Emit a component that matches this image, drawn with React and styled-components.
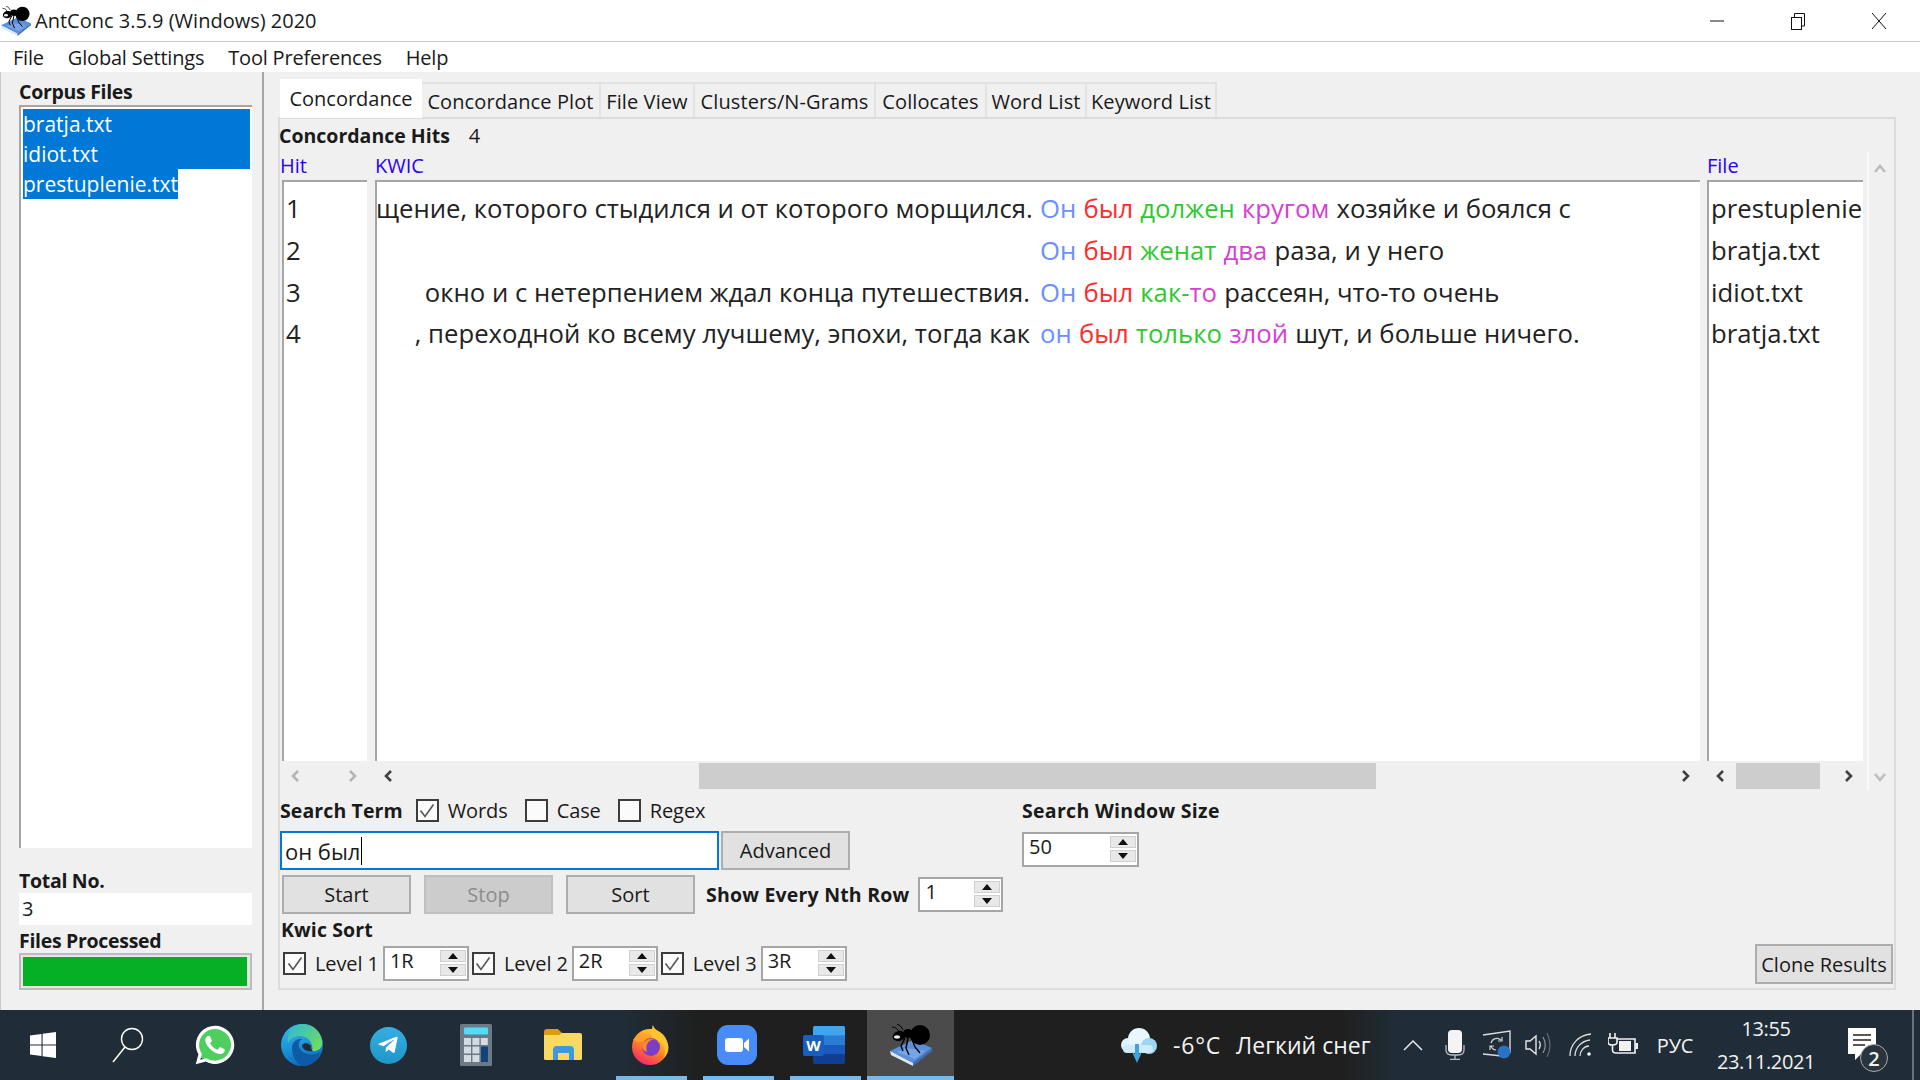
import React from "react";
import styled, { createGlobalStyle } from "styled-components";
import { FaWhatsapp, FaTelegramPlane } from "react-icons/fa";

const GlobalStyle = createGlobalStyle`
  html, body {
    margin: 0;
    padding: 0;
    overflow: hidden;
    background: #f0f0f0;
  }
  * {
    box-sizing: border-box;
  }
`;

const kwicRows = [
  {
    left: "щение, которого стыдился и от которого морщился.",
    words: [["Он", "#6a90ff"], ["был", "#ff2b2b"], ["должен", "#2fc92f"], ["кругом", "#d43fd4"]],
    rest: "хозяйке и боялся с",
  },
  {
    left: "",
    words: [["Он", "#6a90ff"], ["был", "#ff2b2b"], ["женат", "#2fc92f"], ["два", "#d43fd4"]],
    rest: "раза, и у него",
  },
  {
    left: "окно и с нетерпением ждал конца путешествия.",
    words: [["Он", "#6a90ff"], ["был", "#ff2b2b"], ["как-", "#2fc92f"], ["то", "#d43fd4"]],
    rest: "рассеян, что-то очень",
    joined: true,
  },
  {
    left: ", переходной ко всему лучшему, эпохи, тогда как",
    words: [["он", "#6a90ff"], ["был", "#ff2b2b"], ["только", "#2fc92f"], ["злой", "#d43fd4"]],
    rest: "шут, и больше ничего.",
  },
];

const files = ["prestuplenie", "bratja.txt", "idiot.txt", "bratja.txt"];
const tabs = [
  ["Concordance Plot", 179],
  ["File View", 94],
  ["Clusters/N-Grams", 181],
  ["Collocates", 111],
  ["Word List", 100],
  ["Keyword List", 130],
];

function Chevron({ dir = "right", color = "#404040" }) {
  const d = {
    left: "M8 2 L3 7 L8 12",
    right: "M4 2 L9 7 L4 12",
    up: "M2 9 L7 3 L12 9",
    down: "M2 4 L7 10 L12 4",
  }[dir];
  return (
    <svg width="13" height="14" viewBox="0 0 13 14" fill="none">
      <path d={d} stroke={color} strokeWidth="2.6" />
    </svg>
  );
}

function Tick() {
  return (
    <svg width="18" height="18" viewBox="0 0 18 18" fill="none">
      <path d="M2.5 8.5 L7 14.5 L15.5 2.5" stroke="#555" strokeWidth="1.6" />
    </svg>
  );
}

function Spinner({ value, width }) {
  return (
    <SpinBox $width={width}>
      <SpinValue>{value}</SpinValue>
      <SpinButtons>
        <SpinButton>
          <Tri />
        </SpinButton>
        <SpinButton>
          <Tri $down />
        </SpinButton>
      </SpinButtons>
    </SpinBox>
  );
}

function AntIcon({ size = 42 }) {
  return (
    <svg width={size} height={size} viewBox="0 0 42 42">
      <path d="M0 27 L23 16 L42 24 L23 39 Z" fill="#5a8fdc" />
      <path d="M0 27 L23 39 L23 42 L1 31 Z" fill="#dbe7f7" />
      <path d="M23 39 L42 24 L42 27 L23 42 Z" fill="#3f6fba" />
      <path d="M16 24 L35 27 L25 35 L7 28 Z" fill="#78a5e8" />
      <g stroke="#000" fill="none">
        <path d="M7 0 Q11 1 13 6" strokeWidth="1" />
        <path d="M2 3 Q7 3 9 8" strokeWidth="1" />
        <path d="M15 14 L11 22 L13 27" strokeWidth="1.4" />
        <path d="M18 14 L16 24 L19 31" strokeWidth="1.4" />
        <path d="M21 13 L25 23 L30 29" strokeWidth="1.4" />
      </g>
      <ellipse cx="9" cy="12" rx="6.5" ry="5" fill="#000" transform="rotate(-15 9 12)" />
      <ellipse cx="18" cy="9.5" rx="5" ry="4.5" fill="#000" />
      <ellipse cx="30" cy="11" rx="10" ry="10" fill="#000" />
      <ellipse cx="7" cy="13" rx="3" ry="1.7" fill="#eee" />
    </svg>
  );
}

function EdgeIcon() {
  return (
    <svg width="42" height="42" viewBox="0 0 42 42">
      <defs>
        <linearGradient id="edgeBlue" x1="0" y1="0" x2="0.3" y2="1">
          <stop offset="0" stopColor="#35c4ee" />
          <stop offset="1" stopColor="#0c6fc4" />
        </linearGradient>
        <linearGradient id="edgeGreen" x1="0" y1="0" x2="1" y2="0.8">
          <stop offset="0" stopColor="#2cb6dc" />
          <stop offset="1" stopColor="#72de5a" />
        </linearGradient>
      </defs>
      <circle cx="21" cy="21" r="21" fill="url(#edgeBlue)" />
      <path d="M14 2 C24 -3 38 2 41 16 C42.5 24 37 28 31 27 C33 20 28 13 20 12 C15 11.5 9 14 7 19 C6 11 9 5 14 2 Z" fill="url(#edgeGreen)" />
      <path d="M11 24 C11 18 16 14 21 15 C16 18 17 24 22 28 C27 31.5 34 31 40 28 C36 37 28 42 21 42 C15 39 11 32 11 24 Z" fill="#0f5aa6" />
      <path d="M21 21 C24 18 28 19 30 22 C30 24 30 26 32 27 C27 28 21 26 21 21 Z" fill="#202d38" />
    </svg>
  );
}

function CalcIcon() {
  return (
    <svg width="32" height="42" viewBox="0 0 32 42">
      <rect width="32" height="42" rx="1.5" fill="#6c7a86" />
      <rect x="4" y="3.5" width="24" height="7" rx="1" fill="#4fdcf7" />
      {[0, 1, 2].map((c) =>
        [0, 1, 2].map((r) =>
          c === 2 && r > 0 ? null : (
            <rect key={`${c}${r}`} x={4 + c * 8.4} y={14 + r * 8.5} width="7" height="7" fill="#d3dbe3" />
          )
        )
      )}
      <rect x="21" y="22.5" width="7" height="15.5" fill="#12437f" />
    </svg>
  );
}

function FolderIcon() {
  return (
    <svg width="38" height="32" viewBox="0 0 38 32">
      <path d="M0 3 Q0 0 3 0 H14 L18 4 V8 H0 Z" fill="#d99e0a" />
      <path d="M0 6 H15 L18 4 H36 Q38 4 38 6 V30 Q38 31 36 31 H2 Q0 31 0 30 Z" fill="#fad962" />
      <path d="M9 31 V21 Q9 17 13 17 H26 Q30 17 30 21 V31 H25 V24 H14 V31 Z" fill="#3f97dc" />
    </svg>
  );
}

function FirefoxIcon() {
  return (
    <svg width="38" height="40" viewBox="0 0 38 40">
      <defs>
        <linearGradient id="foxBody" x1="0.8" y1="0.1" x2="0.3" y2="1">
          <stop offset="0" stopColor="#ffcf35" />
          <stop offset="0.45" stopColor="#ff8f1f" />
          <stop offset="1" stopColor="#f5246b" />
        </linearGradient>
      </defs>
      <circle cx="19" cy="22" r="18" fill="url(#foxBody)" />
      <path d="M22 0 C23 6 36 9 37.5 22 C37.5 26 36 30 33 33 C36 24 32 15 20 12 C22 8 20 4 22 0 Z" fill="#ffc52e" />
      <path d="M2 15 C7 9 14 7 22 11 L15 15 L8 17 Z" fill="#ffa12b" />
      <circle cx="20" cy="22" r="9" fill="#7a3fc4" />
      <path d="M11 21 C12 16 17 13 24 14 C17 15 14 20 16 27 C13 26 11 24 11 21 Z" fill="#ff8a1f" />
    </svg>
  );
}

function ZoomIcon() {
  return (
    <svg width="40" height="40" viewBox="0 0 40 40">
      <rect width="40" height="40" rx="11" fill="#4a8cf7" />
      <rect x="8" y="13" width="18" height="14" rx="3" fill="#fff" />
      <path d="M27 18 L32 13.5 V26.5 L27 22 Z" fill="#fff" />
    </svg>
  );
}

function WordIcon() {
  return (
    <svg width="42" height="38" viewBox="0 0 42 38">
      <rect x="10" y="0" width="32" height="10" rx="1.5" fill="#41a5ee" />
      <rect x="10" y="9.5" width="32" height="9.5" fill="#2b7cd3" />
      <rect x="10" y="19" width="32" height="9.5" fill="#185abd" />
      <path d="M10 28 H42 V36 Q42 38 40 38 H12 Q10 38 10 36 Z" fill="#103f91" />
      <rect x="0" y="9" width="21" height="21" rx="2" fill="#1a5fc0" />
      <text x="10.5" y="25" textAnchor="middle" fontFamily="'Open Sans', sans-serif" fontWeight="700" fontSize="15" fill="#fff">
        W
      </text>
    </svg>
  );
}

function WeatherIcon() {
  return (
    <svg width="44" height="38" viewBox="0 0 44 38">
      <circle cx="13" cy="19" r="7" fill="#dff2fb" />
      <circle cx="24" cy="13" r="11" fill="#e8f6fd" />
      <circle cx="34" cy="20" r="8" fill="#9ed6f2" />
      <rect x="8" y="19" width="30" height="8" rx="4" fill="#cdebf8" />
      <path d="M20 18 H24 V28 L27 26 L22 37 L17 26 L20 28 Z" fill="#3fa3dc" />
    </svg>
  );
}

const trayIcons = [
  <svg key="chev" width="20" height="12" viewBox="0 0 20 12" fill="none">
    <path d="M1 11 L10 2 L19 11" stroke="#e8e8e8" strokeWidth="1.5" />
  </svg>,
  <svg key="mic" width="20" height="30" viewBox="0 0 20 30" fill="none">
    <rect x="3" y="0" width="14" height="23" rx="4" fill="#f4f4f4" />
    <path d="M1 15 V20 Q1 25 7 25 H13 Q19 25 19 20 V15 M10 25 V29 M5 29.5 H15" stroke="#b8bdc2" strokeWidth="1.3" />
  </svg>,
  <svg key="sync" width="30" height="30" viewBox="0 0 30 30" fill="none">
    <path d="M1 5 L28 1 V23 M20 26 L1 24 Z" stroke="#dcdcdc" strokeWidth="1.4" />
    <path d="M9 13 A6 6 0 0 1 19 10 M20 7 V11 H16 M9 16 A6 6 0 0 0 14 20 M8 20 V16 H12" stroke="#cfcfcf" strokeWidth="1.2" />
    <circle cx="22" cy="22" r="6.5" fill="#2a72c4" />
  </svg>,
  <svg key="vol" width="28" height="26" viewBox="0 0 28 26" fill="none">
    <path d="M1 9 H5 L11 4 V22 L5 17 H1 Z" stroke="#e6e6e6" strokeWidth="1.4" />
    <path d="M14 9 Q16.5 13 14 17" stroke="#e6e6e6" strokeWidth="1.3" />
    <path d="M18 5 Q22.5 13 18 21" stroke="#8d949a" strokeWidth="1.2" />
    <path d="M22 1 Q28 13 22 25" stroke="#666c72" strokeWidth="1.2" />
  </svg>,
  <svg key="wifi" width="24" height="24" viewBox="0 0 24 24" fill="none">
    <path d="M1 23 C1 11 10 2 22 1" stroke="#dcdcdc" strokeWidth="1.3" />
    <path d="M6 23 C6 15 12 8 21 7" stroke="#dcdcdc" strokeWidth="1.3" />
    <path d="M11 23 C11 18 15 13 20 13" stroke="#dcdcdc" strokeWidth="1.3" />
    <circle cx="20" cy="21" r="1.8" fill="#fff" />
  </svg>,
  <svg key="bat" width="30" height="24" viewBox="0 0 30 24" fill="none">
    <path d="M2 0 V5 M7 0 V5 M0 5 H9 V9 Q9 12 4.5 12 Q0 12 0 9 Z M4.5 12 V17 Q4.5 20 8 20" stroke="#f2f2f2" strokeWidth="1.6" />
    <path d="M9 6 H27 V20 H8" stroke="#f2f2f2" strokeWidth="1.6" />
    <rect x="11" y="8" width="12" height="10" fill="#f2f2f2" />
    <rect x="27.5" y="10" width="2.5" height="6" fill="#f2f2f2" />
  </svg>,
];

export default function App() {
  return (
    <>
      <GlobalStyle />
      <Screen>
        <TitleBar>
          <TitleLogo>
            <AntIcon size={30} />
          </TitleLogo>
          <TitleText>AntConc 3.5.9 (Windows) 2020</TitleText>
          <WindowButtons>
            <WindowButton>
              <svg width="16" height="16" viewBox="0 0 16 16">
                <path d="M1 8 H15" stroke="#111" strokeWidth="1" />
              </svg>
            </WindowButton>
            <WindowButton>
              <svg width="16" height="18" viewBox="0 0 16 18" fill="none">
                <rect x="1.5" y="5.5" width="10" height="12" stroke="#111" />
                <path d="M4.5 5 V1.5 H14.5 V14 H12" stroke="#111" />
              </svg>
            </WindowButton>
            <WindowButton>
              <svg width="16" height="18" viewBox="0 0 16 18">
                <path d="M1 1 L15 17 M15 1 L1 17" stroke="#111" strokeWidth="1" />
              </svg>
            </WindowButton>
          </WindowButtons>
        </TitleBar>
        <MenuBar>
          <MenuItem>File</MenuItem>
          <MenuItem>Global Settings</MenuItem>
          <MenuItem>Tool Preferences</MenuItem>
          <MenuItem>Help</MenuItem>
        </MenuBar>

        <Main>
          <LeftPanel>
            <PanelLabel $height={33} $pad={5}>Corpus Files</PanelLabel>
            <FileList>
              <FileItem>bratja.txt</FileItem>
              <FileItem>idiot.txt</FileItem>
              <FileItem $fit>prestuplenie.txt</FileItem>
            </FileList>
            <PanelLabel $height={26} $top={19}>Total No.</PanelLabel>
            <TotalBox>3</TotalBox>
            <PanelLabel $height={26} $top={2}>Files Processed</PanelLabel>
            <Progress>
              <ProgressFill />
            </Progress>
          </LeftPanel>

          <RightPanel>
            <TabStrip>
              <ActiveTab>Concordance</ActiveTab>
              {tabs.map(([name, width]) => (
                <Tab key={name} $width={width}>
                  {name}
                </Tab>
              ))}
            </TabStrip>
            <Pane>
              <HitsLine>
                <HitsLabel>Concordance Hits</HitsLabel>
                <HitsCount>4</HitsCount>
              </HitsLine>

              <Results>
                <ResultColumn $width={85}>
                  <ColumnHead $shift={-2}>Hit</ColumnHead>
                  <ListBox>
                    {[1, 2, 3, 4].map((n) => (
                      <ResultRow key={n}>{n}</ResultRow>
                    ))}
                  </ListBox>
                  <ScrollRow>
                    <Chevron dir="left" color="#b4b4b4" />
                    <ScrollGap />
                    <Chevron dir="right" color="#b4b4b4" />
                  </ScrollRow>
                </ResultColumn>

                <ResultColumn $width={1325} $left={8}>
                  <ColumnHead>KWIC</ColumnHead>
                  <ListBox>
                    {kwicRows.map((row, i) => (
                      <ResultRow key={i}>
                        <KwicLeft>{row.left}</KwicLeft>
                        <KwicRight>
                          {row.words.map(([word, color], j) => (
                            <KwicWord key={j} $color={color} $tight={row.joined && j === 2}>
                              {word}
                            </KwicWord>
                          ))}
                          {row.rest}
                        </KwicRight>
                      </ResultRow>
                    ))}
                  </ListBox>
                  <ScrollRow>
                    <Chevron dir="left" />
                    <ScrollTrack>
                      <ScrollThumb $left={298} $width={677} />
                    </ScrollTrack>
                    <Chevron dir="right" />
                  </ScrollRow>
                </ResultColumn>

                <ResultColumn $width={156} $left={7}>
                  <ColumnHead>File</ColumnHead>
                  <ListBox>
                    {files.map((f, i) => (
                      <ResultRow key={i}>{f}</ResultRow>
                    ))}
                  </ListBox>
                  <ScrollRow>
                    <Chevron dir="left" />
                    <ScrollTrack>
                      <ScrollThumb $left={3} $width={84} />
                    </ScrollTrack>
                    <Chevron dir="right" />
                  </ScrollRow>
                </ResultColumn>

                <VerticalScroll>
                  <Chevron dir="up" color="#bdbdbd" />
                  <Chevron dir="down" color="#bdbdbd" />
                </VerticalScroll>
              </Results>

              <Controls>
                <ControlsMain>
                  <SearchLine>
                    <Bold>Search Term</Bold>
                    <CheckLabel $left={13}>
                      <CheckBox>
                        <Tick />
                      </CheckBox>
                      Words
                    </CheckLabel>
                    <CheckLabel $left={17}>
                      <CheckBox />
                      Case
                    </CheckLabel>
                    <CheckLabel $left={17}>
                      <CheckBox />
                      Regex
                    </CheckLabel>
                  </SearchLine>
                  <InputLine>
                    <SearchInput>
                      он был
                      <Caret />
                    </SearchInput>
                    <PushButton $width={129}>Advanced</PushButton>
                  </InputLine>
                  <ButtonLine>
                    <PushButton $width={129}>Start</PushButton>
                    <PushButton $width={129} $disabled>
                      Stop
                    </PushButton>
                    <PushButton $width={129}>Sort</PushButton>
                    <NthLabel>Show Every Nth Row</NthLabel>
                    <Spinner value="1" width={85} />
                  </ButtonLine>
                  <KwicLabel>Kwic Sort</KwicLabel>
                  <LevelLine>
                    {["1R", "2R", "3R"].map((val, i) => (
                      <LevelGroup key={val}>
                        <CheckLabel $left={0}>
                          <CheckBox>
                            <Tick />
                          </CheckBox>
                          Level {i + 1}
                        </CheckLabel>
                        <Spinner value={val} width={86} />
                      </LevelGroup>
                    ))}
                  </LevelLine>
                </ControlsMain>
                <WindowSize>
                  <WindowSizeLabel>Search Window Size</WindowSizeLabel>
                  <Spinner value="50" width={117} />
                </WindowSize>
                <CloneButton>Clone Results</CloneButton>
              </Controls>
            </Pane>
          </RightPanel>
        </Main>

        <Taskbar>
          <TaskButton $width={85}>
            <svg width="26" height="26" viewBox="0 0 26 26" fill="#fff">
              <path d="M0 3.6 L11.5 2 V12.4 H0 Z M12.6 1.8 L26 0 V12.4 H12.6 Z M0 13.6 H11.5 V24 L0 22.4 Z M12.6 13.6 H26 V26 L12.6 24.2 Z" />
            </svg>
          </TaskButton>
          <TaskButton $width={86}>
            <svg width="32" height="36" viewBox="0 0 32 36" fill="none">
              <circle cx="20" cy="12" r="10.5" stroke="#fff" strokeWidth="1.4" />
              <path d="M13 20 L1 35" stroke="#fff" strokeWidth="1.5" />
            </svg>
          </TaskButton>
          <TaskButton>
            <WhatsappBadge>
              <FaWhatsapp size={44} color="#fff" />
            </WhatsappBadge>
          </TaskButton>
          <TaskButton>
            <EdgeIcon />
          </TaskButton>
          <TaskButton>
            <TelegramBadge>
              <FaTelegramPlane size={22} color="#fff" />
            </TelegramBadge>
          </TaskButton>
          <TaskButton>
            <CalcIcon />
          </TaskButton>
          <TaskButton>
            <FolderIcon />
          </TaskButton>
          <TaskButton $open>
            <FirefoxIcon />
          </TaskButton>
          <TaskButton $open>
            <ZoomIcon />
          </TaskButton>
          <TaskButton $open>
            <WordIcon />
          </TaskButton>
          <TaskButton $open $active>
            <AntIcon />
          </TaskButton>

          <Weather>
            <WeatherIcon />
            <WeatherTemp>-6°C</WeatherTemp>
            <WeatherText>Легкий снег</WeatherText>
          </Weather>
          {trayIcons.map((icon) => (
            <TrayCell key={icon.key}>{icon}</TrayCell>
          ))}
          <TrayLang>РУС</TrayLang>
          <Clock>
            <span>13:55</span>
            <span>23.11.2021</span>
          </Clock>
          <Notifications>
            <svg width="28" height="34" viewBox="0 0 28 34">
              <path d="M0 0 H28 V26 H13 L7 32 V26 H0 Z" fill="#fff" />
              <path d="M5 7 H23 M5 12 H23 M5 17 H17" stroke="#222" strokeWidth="1.4" />
            </svg>
            <NotifyCount>2</NotifyCount>
          </Notifications>
          <ShowDesktop />
        </Taskbar>
      </Screen>
    </>
  );
}

const uiFont = `"Open Sans", "Noto Sans", sans-serif`;

const Screen = styled.div`
  width: 1920px;
  height: 1080px;
  display: flex;
  flex-direction: column;
  font-family: ${uiFont};
  font-size: 20px;
  color: #1a1a1a;
  background: #f0f0f0;
  overflow: hidden;
`;

const TitleBar = styled.div`
  height: 42px;
  flex-shrink: 0;
  display: flex;
  align-items: center;
  background: #fff;
  border-bottom: 1px solid #c8c8c8;
`;

const TitleLogo = styled.div`
  width: 35px;
  padding-left: 1px;
  display: flex;
`;

const TitleText = styled.div`
  font-size: 20px;
`;

const WindowButtons = styled.div`
  margin-left: auto;
  display: flex;
  padding-right: 1px;
`;

const WindowButton = styled.div`
  width: 81px;
  height: 40px;
  display: flex;
  align-items: center;
  justify-content: center;
`;

const MenuBar = styled.div`
  height: 30px;
  flex-shrink: 0;
  display: flex;
  align-items: center;
  gap: 24px;
  padding-left: 13px;
  letter-spacing: -0.2px;
  background: #fff;
`;

const MenuItem = styled.div``;

const Main = styled.div`
  flex: 1;
  display: flex;
  min-height: 0;
  border-left: 1px solid #c8c8c8;
`;

const LeftPanel = styled.div`
  width: 263px;
  flex-shrink: 0;
  display: flex;
  flex-direction: column;
  padding: 0 10px 0 18px;
  border-right: 2px solid #a6a6a6;
`;

const Bold = styled.span`
  font-weight: 700;
  font-size: 19.5px;
  letter-spacing: 0.1px;
  white-space: nowrap;
`;

const PanelLabel = styled.div`
  height: ${(p) => p.$height}px;
  margin-top: ${(p) => p.$top || 0}px;
  padding-top: ${(p) => p.$pad || 0}px;
  display: flex;
  align-items: center;
  font-weight: 700;
  font-size: 19.5px;
  letter-spacing: -0.3px;
`;

const FileList = styled.div`
  height: 743px;
  display: flex;
  flex-direction: column;
  align-items: stretch;
  padding: 2px 2px 0 2px;
  background: #fff;
  border-top: 2px solid #a6a6a6;
  border-left: 2px solid #a6a6a6;
`;

const FileItem = styled.div`
  height: 30px;
  line-height: 30px;
  font-size: 21px;
  color: #fff;
  background: #0078d7;
  align-self: ${(p) => (p.$fit ? "flex-start" : "stretch")};
`;

const TotalBox = styled.div`
  height: 32px;
  line-height: 32px;
  padding-left: 3px;
  background: #fff;
`;

const Progress = styled.div`
  height: 37px;
  padding: 2px 3px 2px 2px;
  background: #e6e6e6;
  border: 2px solid #bcbcbc;
`;

const ProgressFill = styled.div`
  height: 100%;
  background: #06b025;
`;

const RightPanel = styled.div`
  flex: 1;
  display: flex;
  flex-direction: column;
  padding: 7px 24px 0 14px;
  min-width: 0;
`;

const TabStrip = styled.div`
  height: 38px;
  flex-shrink: 0;
  display: flex;
  align-items: flex-end;
  padding-left: 2px;
`;

const ActiveTab = styled.div`
  width: 142px;
  height: 39px;
  margin-bottom: -1px;
  position: relative;
  z-index: 1;
  display: flex;
  align-items: center;
  justify-content: center;
  background: #fff;
`;

const Tab = styled.div`
  width: ${(p) => p.$width}px;
  height: 35px;
  padding-top: 1px;
  display: flex;
  align-items: center;
  justify-content: center;
  white-space: nowrap;
  letter-spacing: 0.1px;
  border: 2px solid #e2e2e2;
  border-left: none;
  border-bottom: none;
`;

const Pane = styled.div`
  height: 873px;
  display: flex;
  flex-direction: column;
  border: 2px solid #dcdcdc;
`;

const HitsLine = styled.div`
  height: 33px;
  flex-shrink: 0;
  display: flex;
  align-items: center;
`;

const HitsLabel = styled(Bold)`
  letter-spacing: 0;
  margin-left: -1px;
`;

const HitsCount = styled.span`
  margin-left: 19px;
`;

const Results = styled.div`
  height: 638px;
  flex-shrink: 0;
  display: flex;
  padding-left: 2px;
`;

const ResultColumn = styled.div`
  width: ${(p) => p.$width}px;
  margin-left: ${(p) => p.$left || 0}px;
  flex-shrink: 0;
  display: flex;
  flex-direction: column;
`;

const ColumnHead = styled.div`
  height: 28px;
  line-height: 28px;
  margin-left: ${(p) => p.$shift || 0}px;
  color: #2a00ff;
`;

const ListBox = styled.div`
  height: 581px;
  padding-top: 6px;
  background: #fff;
  border-top: 2px solid #a6a6a6;
  border-left: 2px solid #a6a6a6;
  overflow: hidden;
`;

const ResultRow = styled.div`
  height: 41.8px;
  line-height: 41.8px;
  display: flex;
  font-size: 25.7px;
  padding-left: 2px;
  white-space: nowrap;
  color: #222;
`;

const KwicLeft = styled.div`
  width: 654px;
  text-align: right;
  flex-shrink: 0;
  margin-left: -3px;
`;

const KwicRight = styled.div`
  margin-left: 10px;
`;

const KwicWord = styled.span`
  color: ${(p) => p.$color};
  margin-right: ${(p) => (p.$tight ? "0" : "0.28em")};
`;

const ScrollRow = styled.div`
  height: 26px;
  margin-top: 2px;
  display: flex;
  align-items: center;
  padding: 0 8px;
  gap: 5px;
`;

const ScrollGap = styled.div`
  flex: 1;
`;

const ScrollTrack = styled.div`
  flex: 1;
  height: 100%;
  position: relative;
`;

const ScrollThumb = styled.div`
  position: absolute;
  top: 0;
  bottom: 0;
  left: ${(p) => p.$left}px;
  width: ${(p) => p.$width}px;
  background: #cdcdcd;
`;

const VerticalScroll = styled.div`
  width: 23px;
  margin-left: 4px;
  flex-shrink: 0;
  display: flex;
  flex-direction: column;
  align-items: center;
  justify-content: space-between;
  padding: 11px 0 6px;
  border-left: 2px solid #fafafa;
`;

const Controls = styled.div`
  flex: 1;
  display: flex;
  min-height: 0;
`;

const ControlsMain = styled.div`
  width: 742px;
  flex-shrink: 0;
  display: flex;
  flex-direction: column;
`;

const SearchLine = styled.div`
  height: 41px;
  flex-shrink: 0;
  display: flex;
  align-items: center;
`;

const CheckLabel = styled.label`
  display: flex;
  align-items: center;
  gap: 9px;
  margin-left: ${(p) => p.$left}px;
  letter-spacing: -0.1px;
  white-space: nowrap;
`;

const CheckBox = styled.span`
  width: 23px;
  height: 23px;
  flex-shrink: 0;
  display: flex;
  align-items: center;
  justify-content: center;
  background: #fbfbfb;
  border: 2px solid #3c3c3c;
`;

const InputLine = styled.div`
  height: 39px;
  flex-shrink: 0;
  display: flex;
  gap: 2px;
`;

const SearchInput = styled.div`
  width: 439px;
  display: flex;
  align-items: center;
  padding-left: 3px;
  font-size: 22px;
  background: #fff;
  border: 2px solid #0078d7;
`;

const Caret = styled.span`
  width: 1px;
  height: 28px;
  margin-left: 1px;
  background: #000;
`;

const PushButton = styled.div`
  width: ${(p) => p.$width}px;
  display: flex;
  align-items: center;
  justify-content: center;
  color: ${(p) => (p.$disabled ? "#8c8c8c" : "#1a1a1a")};
  background: ${(p) => (p.$disabled ? "#cccccc" : "#e1e1e1")};
  border: 2px solid ${(p) => (p.$disabled ? "#bfbfbf" : "#adadad")};
`;

const ButtonLine = styled.div`
  height: 39px;
  flex-shrink: 0;
  margin-top: 5px;
  padding-left: 2px;
  display: flex;
  gap: 13px;
`;

const NthLabel = styled(Bold)`
  align-self: center;
  margin-left: -2px;
  margin-right: -4px;
  letter-spacing: 0.2px;
`;

const SpinBox = styled.div`
  width: ${(p) => p.$width}px;
  height: 35px;
  flex-shrink: 0;
  align-self: center;
  display: flex;
  background: #fff;
  border: 2px solid #a6a6a6;
`;

const SpinValue = styled.div`
  flex: 1;
  padding-left: 5px;
  line-height: 26px;
`;

const SpinButtons = styled.div`
  width: 27px;
  display: flex;
  flex-direction: column;
  gap: 2px;
  padding: 2px 1px 3px 0;
`;

const SpinButton = styled.div`
  flex: 1;
  display: flex;
  align-items: center;
  justify-content: center;
  background: #e8e8e8;
  border: 1px solid #d0d0d0;
`;

const Tri = styled.span`
  width: 0;
  height: 0;
  border-left: 5px solid transparent;
  border-right: 5px solid transparent;
  ${(p) => (p.$down ? "border-top: 6px solid #111;" : "border-bottom: 6px solid #111;")}
`;

const KwicLabel = styled(Bold)`
  height: 32px;
  line-height: 32px;
  margin-left: 1px;
`;

const LevelLine = styled.div`
  height: 35px;
  display: flex;
  padding-left: 3px;
  gap: 3px;
`;

const LevelGroup = styled.div`
  display: flex;
  align-items: center;
  gap: 4px;
`;

const WindowSize = styled.div`
  display: flex;
  flex-direction: column;
  gap: 8px;
  padding-top: 7px;
  flex-shrink: 0;

  & > div {
    align-self: flex-start;
  }
`;

const WindowSizeLabel = styled(Bold)`
  letter-spacing: 0.3px;
`;

const CloneButton = styled(PushButton)`
  width: 138px;
  height: 40px;
  flex-shrink: 0;
  margin-left: auto;
  align-self: flex-end;
  margin-bottom: 4px;
  margin-right: 1px;
`;

const Taskbar = styled.div`
  height: 70px;
  flex-shrink: 0;
  display: flex;
  align-items: stretch;
  color: #f2f2f2;
  font-size: 23px;
  background: linear-gradient(
    90deg,
    #202d38 0,
    #202d38 620px,
    #1f1f1f 700px,
    #1f1f1f 1340px,
    #202d38 1400px
  );
`;

const TaskButton = styled.div`
  width: ${(p) => p.$width || 87}px;
  flex-shrink: 0;
  display: flex;
  align-items: center;
  justify-content: center;
  position: relative;
  background: ${(p) => (p.$active ? "#4b4b4b" : "transparent")};

  ${(p) =>
    p.$open &&
    `&::after {
      content: "";
      position: absolute;
      bottom: 0;
      left: ${p.$active ? 0 : 10}px;
      right: ${p.$active ? 0 : 6}px;
      height: 4px;
      background: #76b9ed;
    }`}
`;

const WhatsappBadge = styled.div`
  width: 42px;
  height: 42px;
  display: flex;
  align-items: center;
  justify-content: center;
  border-radius: 50%;
  background: radial-gradient(circle, #4fce5d 0 62%, transparent 64%);
`;

const TelegramBadge = styled.div`
  width: 37px;
  height: 37px;
  display: flex;
  align-items: center;
  justify-content: center;
  padding-right: 2px;
  border-radius: 50%;
  background: linear-gradient(180deg, #37aee2, #1e96c8);
`;

const Weather = styled.div`
  width: 280px;
  margin-left: auto;
  flex-shrink: 0;
  display: flex;
  align-items: center;
  padding-left: 3px;
`;

const WeatherTemp = styled.span`
  margin-left: 14px;
  letter-spacing: 0.8px;
`;

const WeatherText = styled.span`
  margin-left: 15px;
  white-space: nowrap;
`;

const TrayCell = styled.div`
  width: 42px;
  flex-shrink: 0;
  display: flex;
  align-items: center;
  justify-content: center;
`;

const TrayLang = styled.div`
  width: 62px;
  flex-shrink: 0;
  display: flex;
  align-items: center;
  justify-content: center;
  font-size: 20px;
  letter-spacing: -0.2px;
`;

const Clock = styled.div`
  width: 120px;
  flex-shrink: 0;
  display: flex;
  flex-direction: column;
  align-items: center;
  justify-content: center;
  gap: 6px;
  line-height: 27px;
  font-size: 20px;
  letter-spacing: -0.4px;
`;

const Notifications = styled.div`
  width: 86px;
  flex-shrink: 0;
  display: flex;
  align-items: center;
  justify-content: center;
  position: relative;
  padding-right: 14px;
`;

const NotifyCount = styled.span`
  position: absolute;
  top: 34px;
  left: 34px;
  width: 28px;
  height: 28px;
  display: flex;
  align-items: center;
  justify-content: center;
  font-weight: 600;
  font-size: 20px;
  border-radius: 50%;
  border: 1px solid #aaa;
  background: #2a343c;
`;

const ShowDesktop = styled.div`
  width: 8px;
  flex-shrink: 0;
  border-left: 2px solid #6b7278;
`;
